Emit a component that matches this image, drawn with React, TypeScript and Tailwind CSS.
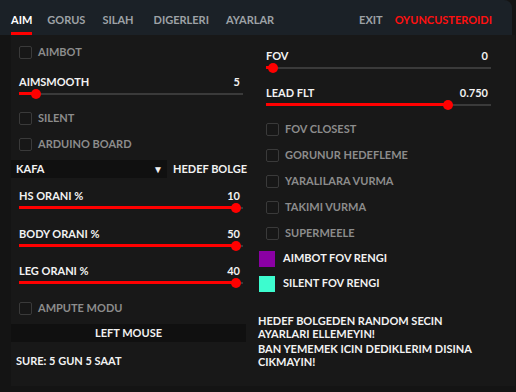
import React from "react";

function Check({ label, className = "" }: { label: string; className?: string }) {
  return (
    <div className={`h-[26px] flex items-center pl-[8px] ${className}`}>
      <div className="w-[13px] h-[13px] rounded-[2px] border border-[#3a3a3a] bg-[#171717]" />
      <span className="ml-[6px] text-[#8c8c8c] leading-[14px] whitespace-nowrap">{label}</span>
    </div>
  );
}

function Slider({ label, value, pct, className = "" }: { label: string; value: string; pct: number; className?: string }) {
  return (
    <div className={`pl-[8px] pr-[3px] ${className}`}>
      <div className="h-[14px] flex items-center justify-between leading-[14px] text-[#f2f2f2]">
        <span>{label}</span>
        <span className="mr-[3px]">{value}</span>
      </div>
      <div className="relative h-[9px] flex items-center">
        <div className="w-full h-[2px] bg-[#3a3a3a]" />
        <div className="absolute left-0 h-[3px] bg-[#ff0000]" style={{ width: `${pct}%` }} />
        <div
          className="absolute w-[10px] h-[10px] rounded-full bg-[#ff0000] -ml-[5px]"
          style={{ left: `${pct}%` }}
        />
      </div>
    </div>
  );
}

function Tab({ label, active = false, className = "" }: { label: string; active?: boolean; className?: string }) {
  return (
    <div className={`relative h-full flex items-center pt-[5px] ${className}`}>
      <span className={active ? "text-white" : "text-[#9ea2a6]"}>{label}</span>
      {active && <div className="absolute left-0 right-0 bottom-0 h-[3px] bg-[#ff0000]" />}
    </div>
  );
}

export default function App() {
  return (
    <div
      className="w-[516px] h-[392px] bg-[#141414] text-[11px] font-bold overflow-hidden"
      style={{ fontFamily: "Lato, 'Liberation Sans', sans-serif" }}
    >
      <div className="w-[512px] h-[35px] bg-[#1b2127] rounded-tr-[8px] flex items-stretch pl-[11px] pr-[20px]">
        <Tab label="AIM" active />
        <Tab label="GORUS" className="ml-[15px]" />
        <Tab label="SILAH" className="ml-[17px]" />
        <Tab label="DIGERLERI" className="ml-[20px]" />
        <Tab label="AYARLAR" className="ml-[17px]" />
        <div className="flex-1" />
        <Tab label="EXIT" />
        <div className="h-full flex items-center pt-[5px] ml-[12px] text-[#ff1010]">OYUNCUSTEROIDI</div>
      </div>

      <div className="w-[504px] h-[351px] ml-[11px] bg-[#181818] flex">
        {/* Left column */}
        <div className="w-[235px] shrink-0 flex flex-col pt-[4px]">
          <Check label="AIMBOT" />
          <Slider label="AIMSMOOTH" value="5" pct={7.6} className="mt-[10px]" />
          <Check label="SILENT" className="mt-[7px]" />
          <Check label="ARDUINO BOARD" />
          <div className="mt-[3px] h-[18px] flex items-center">
            <div className="w-[156px] shrink-0 h-full bg-[#101010] flex items-center justify-between pl-[5px] pr-[4px] text-[#f2f2f2]">
              <span>KAFA</span>
              <span className="text-[10px] leading-none">▼</span>
            </div>
            <span className="ml-[6px] text-[#f2f2f2] whitespace-nowrap">HEDEF BOLGE</span>
          </div>
          <Slider label="HS ORANI %" value="10" pct={97} className="mt-[11px]" />
          <Slider label="BODY ORANI %" value="50" pct={97} className="mt-[15px]" />
          <Slider label="LEG ORANI %" value="40" pct={97} className="mt-[14px]" />
          <Check label="AMPUTE MODU" className="mt-[8px]" />
          <div className="mt-[3px] h-[18px] bg-[#101010] flex items-center justify-center text-[#f2f2f2]">
            LEFT MOUSE
          </div>
          <div className="mt-[12px] h-[14px] leading-[14px] pl-[5px] text-[#f2f2f2]">SURE: 5 GUN 5 SAAT</div>
        </div>

        {/* Right column */}
        <div className="w-[236px] shrink-0 ml-[12px] flex flex-col pt-[14px]">
          <Slider label="FOV" value="0" pct={3} />
          <Slider label="LEAD FLT" value="0.750" pct={81} className="mt-[14px]" />
          <Check label="FOV CLOSEST" className="mt-[7px]" />
          <Check label="GORUNUR HEDEFLEME" />
          <Check label="YARALILARA VURMA" />
          <Check label="TAKIMI VURMA" />
          <Check label="SUPERMEELE" />
          <div className="h-[25px] flex items-center pl-[1px]">
            <div className="w-[16px] h-[16px] bg-[#8a00a3]" />
            <span className="ml-[8px] text-[#f2f2f2]">AIMBOT FOV RENGI</span>
          </div>
          <div className="h-[25px] flex items-center pl-[1px]">
            <div className="w-[16px] h-[16px] bg-[#3dfccf]" />
            <span className="ml-[8px] text-[#f2f2f2]">SILENT FOV RENGI</span>
          </div>
          <div className="mt-[18px] text-[#f2f2f2] leading-[13px]">
            <div>HEDEF BOLGEDEN RANDOM SECIN</div>
            <div>AYARLARI ELLEMEYIN!</div>
            <div className="mt-[2px]">BAN YEMEMEK ICIN DEDIKLERIM DISINA</div>
            <div>CIKMAYIN!</div>
          </div>
        </div>
      </div>
    </div>
  );
}
